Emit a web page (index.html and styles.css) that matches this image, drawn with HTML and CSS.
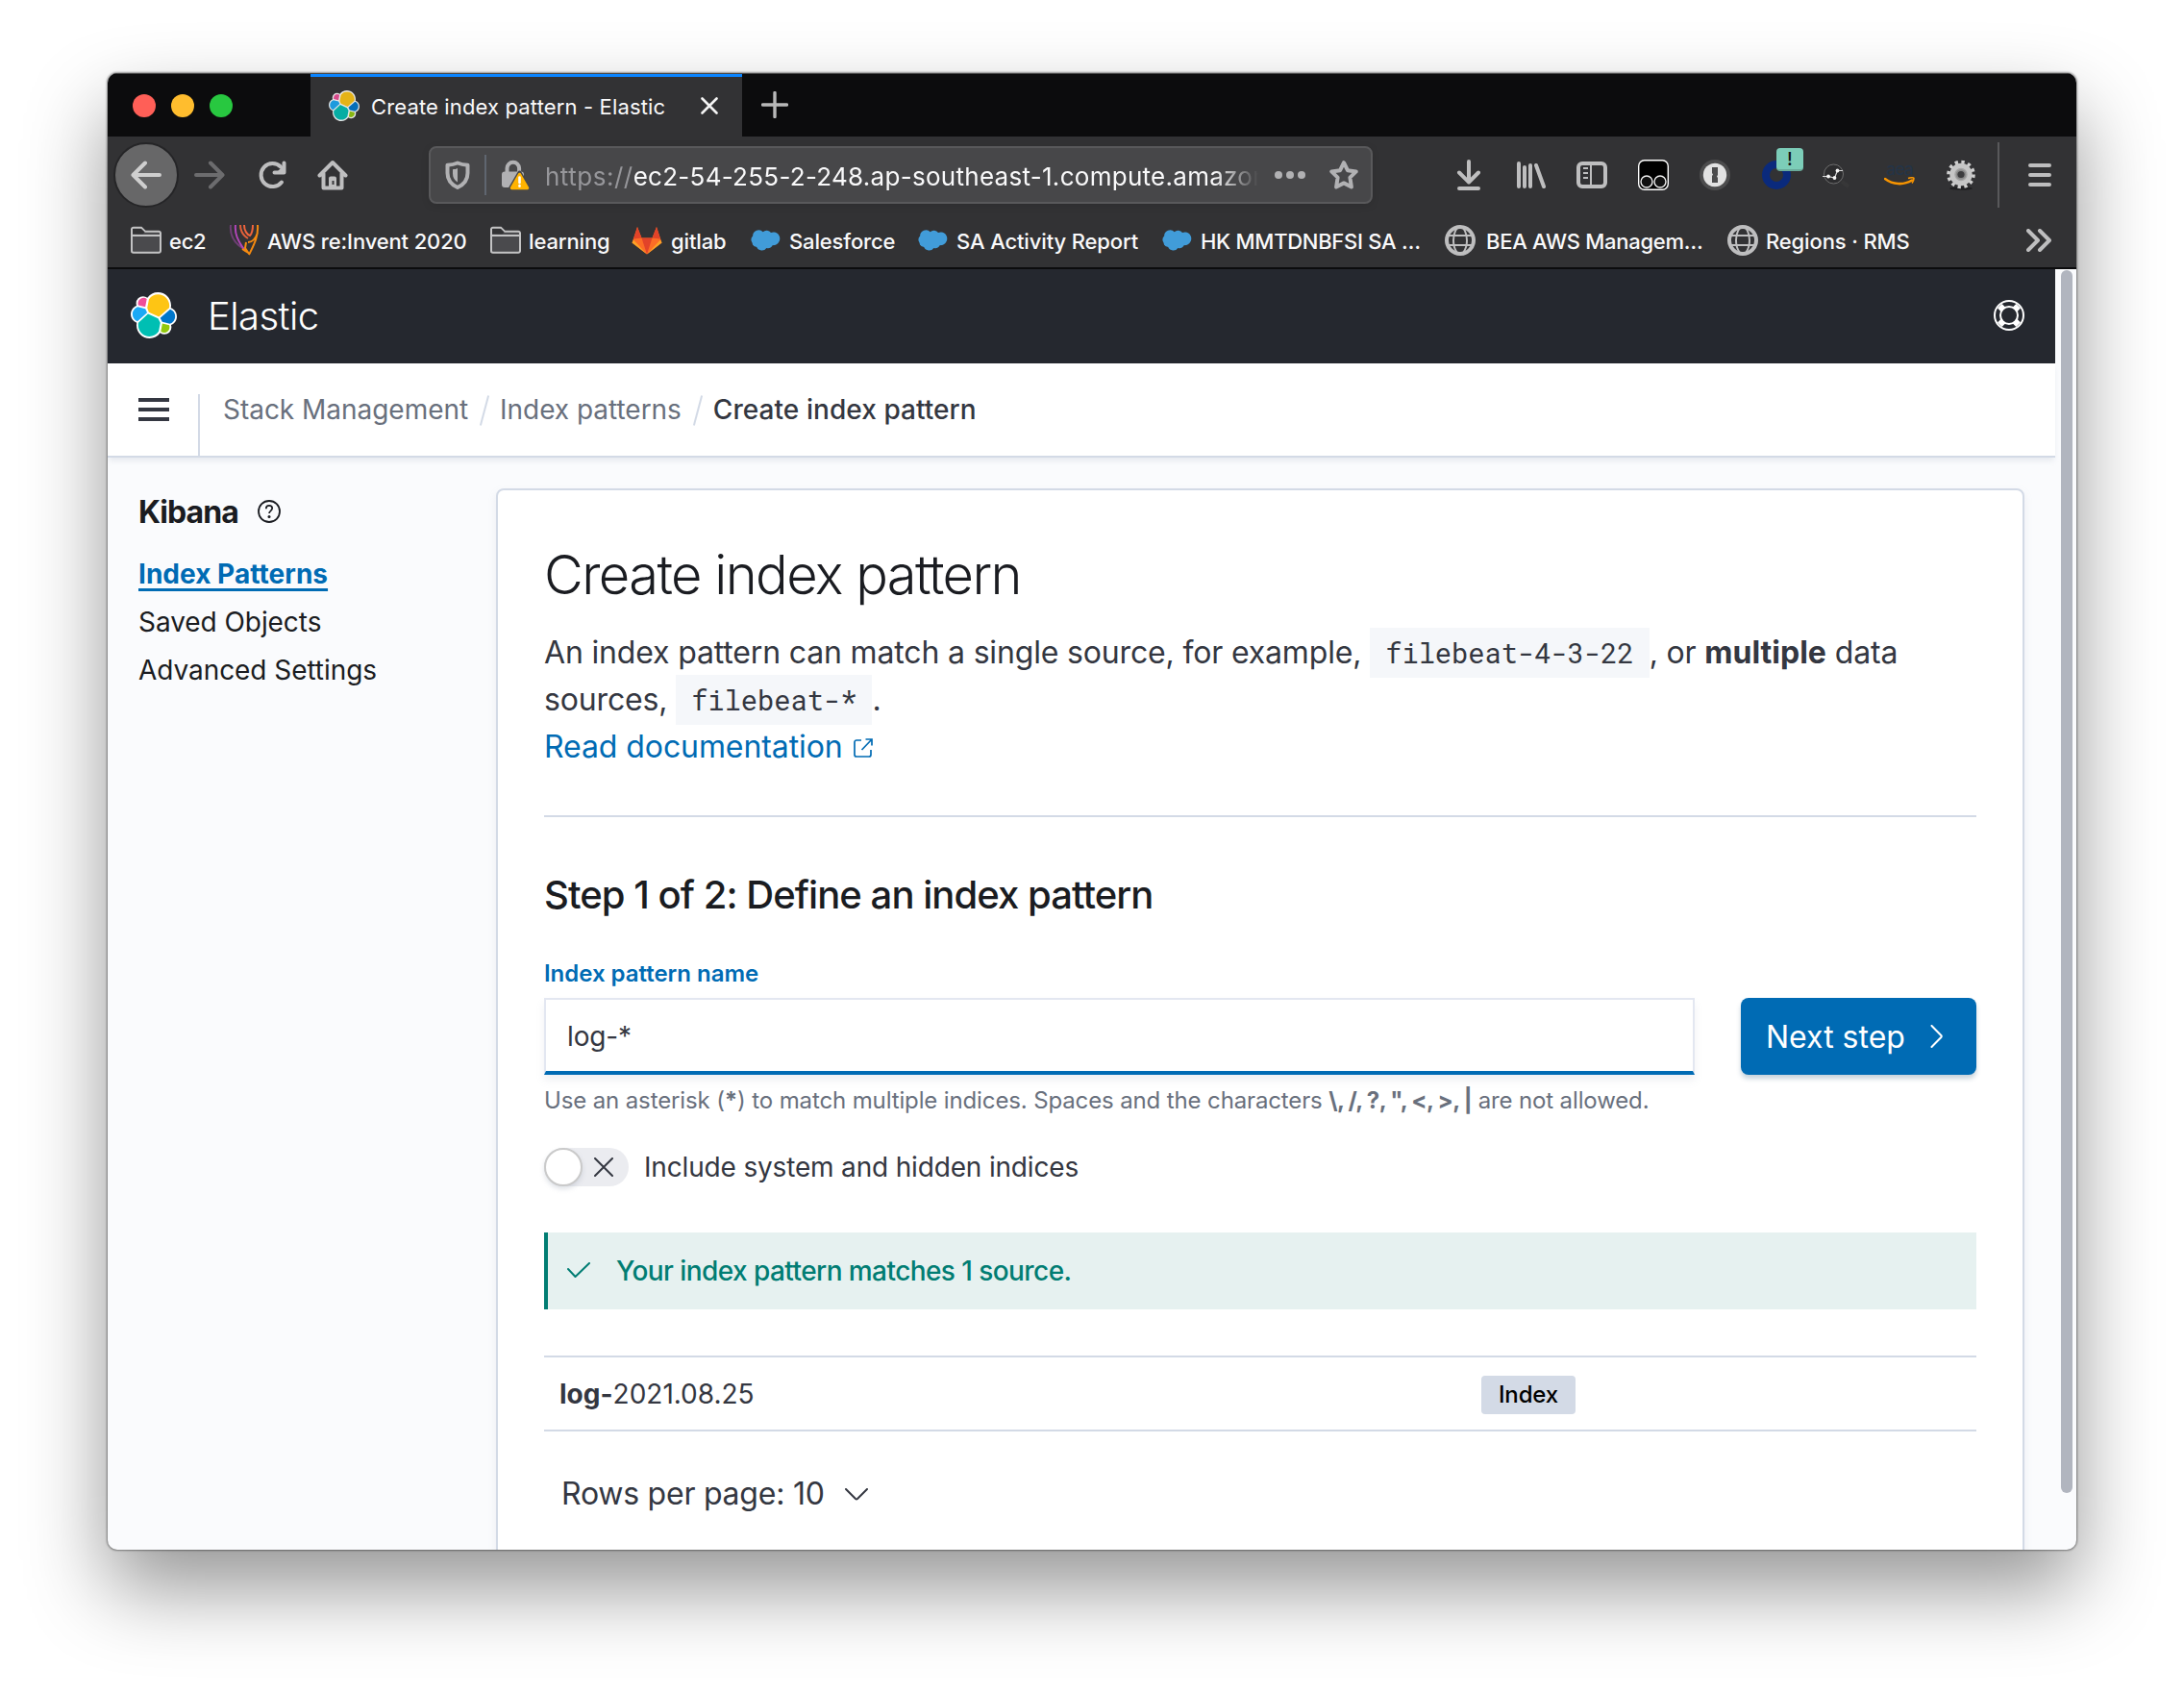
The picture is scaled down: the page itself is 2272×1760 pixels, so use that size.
FILE: index.html
```html
<!DOCTYPE html>
<html lang="en">
<head>
<meta charset="utf-8">
<title>Create index pattern - Elastic</title>
<link rel="stylesheet" href="styles.css">
</head>
<body>
<svg class="sprite" width="0" height="0">
  <symbol id="elastic" viewBox="0 0 32 32">
    <path fill="#fff" d="M32 16.77c0-2.68-1.66-5.02-4.16-5.93.11-.57.17-1.14.17-1.74C28 4.08 23.92 0 18.91 0a9.07 9.07 0 0 0-7.36 3.77 4.8 4.8 0 0 0-2.96-1.01 4.85 4.85 0 0 0-4.85 4.85c0 .59.11 1.16.3 1.69C1.64 10.2 0 12.57 0 15.23c0 2.69 1.67 5.04 4.18 5.95-.11.56-.17 1.14-.17 1.74 0 5 4.07 9.07 9.06 9.07 2.93 0 5.64-1.41 7.35-3.78a4.82 4.82 0 0 0 2.98 1.03 4.85 4.85 0 0 0 4.85-4.85c0-.59-.11-1.16-.3-1.69 2.4-.87 4.05-3.24 4.05-5.93"/>
    <path fill="#fec514" d="M12.58 13.787l7.002 3.211 7.066-6.213a7.849 7.849 0 0 0 .152-1.557c0-4.287-3.477-7.775-7.749-7.775A7.738 7.738 0 0 0 12.655 4.8l-1.176 6.1 1.1 2.887z"/>
    <path fill="#00bfb3" d="M5.333 21.228A7.964 7.964 0 0 0 5.18 22.8c0 4.301 3.489 7.8 7.778 7.8a7.77 7.77 0 0 0 6.415-3.39l1.166-6.095-1.557-2.985-7.03-3.211-6.62 6.209z"/>
    <path fill="#f04e98" d="M5.288 9.067l4.8 1.137L11.14 4.73a3.785 3.785 0 0 0-6.077 3.027c0 .453.08.907.226 1.31z"/>
    <path fill="#1ba9f5" d="M4.872 10.214C2.737 10.923 1.24 12.98 1.24 15.24a5.33 5.33 0 0 0 3.4 4.97l6.733-6.1-1.236-2.647z"/>
    <path fill="#93c90e" d="M20.872 27.216a3.782 3.782 0 0 0 6.07-3.026 3.94 3.94 0 0 0-.225-1.32l-4.796-1.125z"/>
    <path fill="#07c" d="M21.845 20.563l5.28 1.237c2.146-.71 3.642-2.768 3.642-5.028a5.318 5.318 0 0 0-3.41-4.96l-6.906 6.06z"/>
  </symbol>
  <symbol id="folder" viewBox="0 0 32 32">
    <path d="M1 27V4.500a1.800 1.800 0 0 1 1.800-1.800H11l4 4H29.200A1.800 1.800 0 0 1 31 8.500V27a1.800 1.800 0 0 1-1.800 1.800H2.800A1.800 1.800 0 0 1 1 27z" fill="#4a4a4d" stroke="#c3c3c4" stroke-width="2"/>
    <path d="M2 9V4h9l3.500 3.500-2 2z" fill="#323234"/>
    <path d="M1 11h30" stroke="#c3c3c4" stroke-width="2"/>
  </symbol>
  <symbol id="cloud" viewBox="0 0 32 32">
    <path fill="#419cd9" d="M12.700 7.200a5.400 5.400 0 0 1 8.300.9 6.600 6.600 0 0 1 9.300 6c0 4-3.200 7.500-7.400 7a5.200 5.200 0 0 1-6.500 2.800 5.900 5.900 0 0 1-10.200-.9A5.200 5.200 0 0 1 1.500 18.400 5.500 5.500 0 0 1 2.100 11.500 6.200 6.200 0 0 1 12.700 7.200z"/>
  </symbol>
  <symbol id="globe" viewBox="0 0 32 32">
    <g fill="none" stroke="#bebebf"><circle cx="16" cy="16" r="14" stroke-width="4"/><ellipse cx="16" cy="16" rx="7" ry="14" stroke-width="2"/><path d="M3 11h26M3 21h26" stroke-width="2"/></g>
  </symbol>
</svg>

<div class="window">
  <div class="tabstrip">
    <div class="lights"><i class="red"></i><i class="yellow"></i><i class="green"></i></div>
    <div class="tab">
      <svg class="favicon"><use href="#elastic"/></svg>
      <span class="tab-title">Create index pattern - Elastic</span>
      <svg class="tab-close" viewBox="0 0 18 18"><path d="M1.500 1.500l15 15M16.500 1.500l-15 15" stroke="#f4f4f4" stroke-width="2.600" stroke-linecap="round"/></svg>
    </div>
    <svg class="newtab" viewBox="0 0 28 28"><path d="M14 1.500v25M1.500 14h25" stroke="#b8b8b8" stroke-width="3.400" stroke-linecap="round"/></svg>
  </div>

  <div class="toolbar">
    <div class="back"><svg viewBox="0 0 32 32"><path d="M30 16H3M15 3.500L2.500 16 15 28.500" fill="none" stroke="#cfcfcf" stroke-width="4" stroke-linecap="round" stroke-linejoin="round"/></svg></div>
    <svg class="ic forward" viewBox="0 0 32 32"><path d="M2 16h27M17 3.500L29.500 16 17 28.500" fill="none" stroke="#6c6c6e" stroke-width="4" stroke-linecap="round" stroke-linejoin="round"/></svg>
    <svg class="ic reload" viewBox="0 0 32 32"><path d="M26 23.500A12 12 0 1 1 25 7.500" fill="none" stroke="#bebebf" stroke-width="4" stroke-linecap="round"/><path d="M28.500 3.500v10h-10" fill="none" stroke="#bebebf" stroke-width="4" stroke-linecap="round" stroke-linejoin="round"/><path d="M21 13h8V5z" fill="#bebebf"/></svg>
    <svg class="ic home" viewBox="0 0 32 32"><path d="M2.500 16.500L16 3l13.500 13.500M6.500 14.500v15h19v-15" fill="none" stroke="#bebebf" stroke-width="4" stroke-linecap="round" stroke-linejoin="round"/><path d="M12 30V19.500a2 2 0 0 1 2-2h4a2 2 0 0 1 2 2V30z" fill="#bebebf"/><rect x="15.500" y="22" width="2" height="4" fill="#38383b"/></svg>
    <div class="urlbar">
      <svg class="shield" viewBox="0 0 26 30"><path d="M13 2.500c3 1.300 6.500 2 10.500 2.200V13c0 7.500-4 12-10.500 15C6.500 25 2.500 20.500 2.500 13V4.700C6.500 4.500 10 3.800 13 2.500z" fill="none" stroke="#b1b1b3" stroke-width="4" stroke-linejoin="round"/><path d="M13 8v14.500c-3.300-2-5-4.700-5-9V9.200c2 0 3.500-.4 5-1.200z" fill="#b1b1b3"/></svg>
      <i class="url-sep"></i>
      <svg class="lock" viewBox="0 0 30 32"><path d="M6.500 14V9a6.300 6.300 0 0 1 12.600 0v5" fill="none" stroke="#b1b1b3" stroke-width="4"/><rect x="1" y="12.500" width="23" height="16.500" rx="3" fill="#b1b1b3"/><path d="M19.500 13.500L30 31.500H9z" fill="#474749" stroke="#474749" stroke-width="4" stroke-linejoin="round"/><path d="M19.500 15.500L27.500 29.500H11.500z" fill="#ffb300" stroke="#ffb300" stroke-width="3.500" stroke-linejoin="round"/><path d="M19.500 18.500v5.500M19.500 27v.8" stroke="#fff" stroke-width="2.600" stroke-linecap="round"/></svg>
      <div class="url"><span class="scheme">https://</span>ec2-54-255-2-248.ap-southeast-1.compute.amazonaws.com</div>
      <svg class="dots" viewBox="0 0 32 8"><g fill="#b1b1b3"><circle cx="4" cy="4" r="4"/><circle cx="16" cy="4" r="4"/><circle cx="28" cy="4" r="4"/></g></svg>
      <svg class="star" viewBox="0 0 32 32"><path d="M16 3.200l3.900 8 8.900 1.200-6.400 6.200 1.500 9.900L16 24.400l-7.900 4.100 1.500-9.900-6.400-6.200 8.900-1.200z" fill="none" stroke="#b1b1b3" stroke-width="4" stroke-linejoin="round"/></svg>
    </div>
    <div class="extensions">
      <svg viewBox="0 0 32 32"><path d="M16 2v21M6 13.500l10 10 10-10M6 30h20" fill="none" stroke="#bebebf" stroke-width="4" stroke-linecap="round" stroke-linejoin="round"/></svg>
      <svg viewBox="0 0 32 32"><path d="M4 4v24M10 8v20M16 6v22M22 6l8 22" fill="none" stroke="#bebebf" stroke-width="4" stroke-linecap="round"/></svg>
      <svg viewBox="0 0 32 32"><rect x="2" y="4" width="28" height="24" rx="4" fill="none" stroke="#bebebf" stroke-width="4"/><path d="M15 4v24M7 9h5M7 14h5M7 19h5" stroke="#bebebf" stroke-width="2"/></svg>
      <svg viewBox="0 0 32 32"><rect x=".7" y=".7" width="30.600" height="30.600" rx="6" fill="#000" stroke="#fff" stroke-width="1.400"/><g fill="#111" stroke="#eee" stroke-width="1.400"><circle cx="9" cy="23" r="6"/><circle cx="23" cy="23" r="6"/></g></svg>
      <svg viewBox="0 0 32 32"><circle cx="16" cy="16" r="16" fill="#4c4c4d"/><circle cx="16" cy="16" r="12.200" fill="#e2e2e2"/><path d="M13 8h6v8l-1 1.500 1 1.500v5h-6v-7l1-1.500-1-1.500z" fill="#4c4c4d"/></svg>
      <div class="ext-badged"><svg viewBox="0 0 32 32"><circle cx="16" cy="16" r="11" fill="none" stroke="#0a2a7c" stroke-width="8"/></svg><b>!</b></div>
      <svg viewBox="0 0 32 32"><circle cx="11.500" cy="15" r="10" fill="#2c2c2e" stroke="#7d7d7d" stroke-width=".8"/><path d="M20 23l7 5" stroke="#373738" stroke-width="4"/><path d="M0 17.500h6l6.500 1.500 3-7.500h5.500" fill="none" stroke="#d8d8d8" stroke-width="1.200"/><g fill="#f4f4f4"><circle cx="6" cy="17.500" r="1.900"/><circle cx="12.500" cy="19" r="1.900"/><circle cx="15.500" cy="11.500" r="1.900"/></g></svg>
      <div class="ext-aea"><span>aea</span><svg viewBox="0 0 32 10"><path d="M1 2c8 6 19 7 28 1.500" fill="none" stroke="#f79400" stroke-width="2.600" stroke-linecap="round"/><path d="M25 1.500c3-1 6-1 6 0s-.5 3-2 5" fill="none" stroke="#f79400" stroke-width="1.600"/></svg></div>
      <svg viewBox="0 0 32 32"><ellipse cx="16" cy="30" rx="12" ry="1.800" fill="#202022"/><circle cx="16" cy="15.500" r="12.500" fill="none" stroke="#cfcfcf" stroke-width="4.600" stroke-dasharray="3.200 3.344"/><circle cx="16" cy="15.500" r="8.200" fill="none" stroke="#c6c6c6" stroke-width="7"/><circle cx="16" cy="15.500" r="6" fill="#8a8a8a" stroke="#a4a4a4" stroke-width="1.400"/><circle cx="16" cy="15.500" r="3.600" fill="#3c3c3e"/></svg>
    </div>
    <i class="tool-sep"></i>
    <svg class="menu" viewBox="0 0 24 24"><path d="M2 2h20M2 12h20M2 22h20" stroke="#bebebf" stroke-width="4" stroke-linecap="round"/></svg>
  </div>

  <div class="bookmarks">
    <div class="bm"><svg><use href="#folder"/></svg><span class="snug">ec2</span></div>
    <div class="bm"><svg viewBox="0 0 32 32"><g fill="none" stroke-width="2"><path d="M2 0c-1 10 3 19 14 25" stroke="#6e3f74"/><path d="M7 0c-1 9 2 16 10 27" stroke="#b146b8"/><path d="M12 0c0 7 3 11 8 14" stroke="#e0603a"/><path d="M16 0c0 6 3 10 6 11 3-3 3-7 3-11" stroke="#f0643c"/><path d="M30 0c1 12-4 21-9 31M30 8c-2 6-6 10-10 10" stroke="#f58a10"/><path d="M14 25l8 5M18 18l-1 6 4 6" stroke="#f58a10"/></g></svg><span>AWS re:Invent 2020</span></div>
    <div class="bm"><svg><use href="#folder"/></svg><span>learning</span></div>
    <div class="bm gitlab"><svg viewBox="0 0 32 32"><path d="M16 30.500L.5 18.500 6 2l4.500 11.500h11L26 2l5.500 16.500z" fill="#fc6d26"/><path d="M16 30.500L10.500 13.500h11z" fill="#e24329"/><path d="M16 30.500L2 15.500.5 18.500zM16 30.500L30 15.500l1.500 3z" fill="#fca326"/><path d="M2 14.500L6 2l4.500 11.500zM30 14.500L26 2l-4.500 11.500z" fill="#e24329"/></svg><span>gitlab</span></div>
    <div class="bm"><svg><use href="#cloud"/></svg><span>Salesforce</span></div>
    <div class="bm"><svg><use href="#cloud"/></svg><span>SA Activity Report</span></div>
    <div class="bm"><svg><use href="#cloud"/></svg><span class="snug">HK MMTDNBFSI SA …</span></div>
    <div class="bm globe"><svg><use href="#globe"/></svg><span class="snug">BEA AWS Managem…</span></div>
    <div class="bm"><svg><use href="#globe"/></svg><span>Regions · RMS</span></div>
    <svg class="more" viewBox="0 0 26 24"><path d="M2 2l10 10L2 22M14 2l10 10-10 10" fill="none" stroke="#bebebf" stroke-width="4" stroke-linecap="round" stroke-linejoin="round"/></svg>
  </div>

  <div class="viewport">
    <div class="app">
      <header class="header">
        <svg class="logo"><use href="#elastic"/></svg>
        <span class="brand">Elastic</span>
        <svg class="help" viewBox="0 0 32 32"><g fill="none" stroke="#fff" stroke-width="2"><circle cx="16" cy="16" r="15"/><circle cx="16" cy="16" r="9"/></g><path d="M6.300 6.300l3.800 3.800M25.700 6.300l-3.800 3.800M6.300 25.700l3.800-3.800M25.700 25.700l-3.800-3.800" stroke="#fff" stroke-width="6.500"/></svg>
      </header>
      <div class="crumbbar">
        <svg class="burger" viewBox="0 0 32 24"><path d="M0 2h32M0 12h32M0 22h32" stroke="#343741" stroke-width="4"/></svg>
        <nav class="crumbs"><span>Stack Management</span><i></i><span>Index patterns</span><i></i><span class="current">Create index pattern</span></nav>
      </div>
      <div class="body">
        <aside class="side">
          <h2>Kibana <svg viewBox="0 0 24 24"><circle cx="12" cy="12" r="11" fill="none" stroke="#1a1c21" stroke-width="1.800"/><path d="M8.800 9.200c0-2 1.400-3.300 3.200-3.300s3.200 1.200 3.200 2.900c0 2.500-3.200 2.500-3.200 5.200" fill="none" stroke="#1a1c21" stroke-width="1.700"/><circle cx="12" cy="17.500" r="1.500" fill="#1a1c21"/></svg></h2>
          <a class="active">Index Patterns</a>
          <a>Saved Objects</a>
          <a>Advanced Settings</a>
        </aside>
        <main class="panel">
          <h1>Create index pattern</h1>
          <p class="intro">An index pattern can match a single source, for example, <code>filebeat-4-3-22</code>, or <strong>multiple</strong> data sources, <code>filebeat-*</code>.<br><a>Read documentation<svg viewBox="0 0 20 20"><path d="M8 2H3a2 2 0 0 0-2 2v13a2 2 0 0 0 2 2h13a2 2 0 0 0 2-2v-5M12.500 1H19v6.500M19 1L8.500 12" fill="none" stroke="#006bb4" stroke-width="1.700"/></svg></a></p>
          <hr>
          <h3>Step 1 of 2: Define an index pattern</h3>
          <div class="label">Index pattern name</div>
          <div class="row">
            <div class="input">log-*</div>
            <div class="button">Next step<svg viewBox="0 0 14 24"><path d="M1.500 1l9.800 10a1.500 1.500 0 0 1 0 2L1.500 23" fill="none" stroke="#fff" stroke-width="2" stroke-linecap="round"/></svg></div>
          </div>
          <div class="hint">Use an asterisk (<b>*</b>) to match multiple indices. Spaces and the characters <b class="chars">\, /, ?, ", &lt;, &gt;, |</b> are not allowed.</div>
          <div class="toggle"><div class="switch"><i></i><svg viewBox="0 0 20 20"><path d="M1 1l18 18M19 1L1 19" stroke="#343741" stroke-width="2" stroke-linecap="round"/></svg></div><span>Include system and hidden indices</span></div>
          <div class="callout"><svg viewBox="0 0 24 16"><path d="M1 7l7.500 8L23 1" fill="none" stroke="#017d73" stroke-width="2" stroke-linecap="round" stroke-linejoin="round"/></svg><span>Your index pattern matches 1 source.</span></div>
          <div class="table"><span><b>log-</b>2021.08.25</span><span class="badge">Index</span></div>
          <div class="pager">Rows per page: 10<svg viewBox="0 0 24 13"><path d="M1 1l10 10a1.500 1.500 0 0 0 2 0L23 1" fill="none" stroke="#343741" stroke-width="2" stroke-linecap="round"/></svg></div>
        </main>
      </div>
    </div>
    <div class="scroll"><i></i></div>
  </div>
</div>
</body>
</html>
```
FILE: styles.css
```css
* { box-sizing: border-box; }
body { margin: 0; padding: 76px 112px 0; height: 1760px; overflow: hidden; background: #fff; font-family: Inter, "Liberation Sans", sans-serif; color: #343741; }
.sprite { position: absolute; }
svg { display: block; flex: none; }
.window { height: 1536px; border-radius: 10px; overflow: hidden; background: #fafbfd; display: flex; flex-direction: column; box-shadow: 0 0 2px 1px rgba(0,0,0,.4), 0 40px 84px rgba(0,0,0,.42); }

.tabstrip { height: 66px; flex: none; background: #0c0c0d; display: flex; border-top: 1px solid #4a4a4a; padding-left: 26px; }
.lights { width: 185px; display: flex; gap: 16px; align-items: center; }
.lights i { width: 24px; height: 24px; border-radius: 50%; }
.red { background: #ff5f57; }
.yellow { background: #ffbd2e; }
.green { background: #28c840; }
.tab { width: 449px; background: #323234; border-top: 3px solid #0a84ff; display: flex; align-items: center; padding: 0 25px 2px 19px; }
.favicon { width: 32px; height: 32px; margin-right: 12px; opacity: .88; }
.tab-title { font-size: 22px; letter-spacing: .14px; color: #f9f9fa; padding-top: 2px; flex: 1; white-space: nowrap; }
.tab-close { width: 18px; height: 18px; }
.newtab { width: 28px; height: 28px; margin: 18px 0 0 20px; }

.toolbar { height: 80px; flex: none; background: #323234; display: flex; align-items: center; padding-left: 6px; }
.back { width: 68px; height: 68px; border-radius: 50%; background: #676768; border: 2px solid #252527; display: flex; align-items: center; justify-content: center; }
.back svg, .ic { width: 32px; height: 32px; }
.forward { margin-left: 16px; }
.reload { margin-left: 33px; }
.home { margin-left: 31px; }
.urlbar { width: 982px; height: 60px; margin-left: 84px; background: #474749; border: 2px solid #59595b; border-radius: 8px; display: flex; align-items: center; padding-left: 15px; box-shadow: 0 2px 8px rgba(0,0,0,.1); }
.shield { width: 26px; height: 30px; }
.url-sep { width: 2px; height: 42px; background: #5f6670; margin: 0 15px; }
.lock { width: 30px; height: 32px; }
.url { width: 742px; margin-left: 16px; padding-top: 2px; font-size: 26px; letter-spacing: .28px; color: #f9f9fa; white-space: nowrap; overflow: hidden; -webkit-mask-image: linear-gradient(90deg, #000 696px, transparent 742px); mask-image: linear-gradient(90deg, #000 696px, transparent 742px); }
.scheme { color: #96969a; letter-spacing: .5px; }
.dots { width: 32px; height: 8px; margin-left: 17px; }
.star { width: 32px; height: 32px; margin-left: 24px; }
.extensions { display: flex; gap: 32px; margin-left: 84px; }
.extensions > svg, .ext-badged, .ext-aea { width: 32px; height: 32px; position: relative; }
.ext-badged b { position: absolute; left: 16px; top: -12px; width: 28px; height: 24px; border-radius: 4px; background: #7ccdb8; border-bottom: 2px solid #69ab9a; color: #111; font: 500 19px/24px Inter, sans-serif; text-align: center; }
.ext-aea span { display: block; font: 400 18px/20px Inter, sans-serif; color: #243447; letter-spacing: -1px; text-align: center; }
.ext-aea svg { width: 32px; height: 10px; margin-top: -2px; }
.tool-sep { width: 2px; height: 68px; background: #59595b; margin-left: 22px; }
.menu { width: 24px; height: 24px; margin-left: 30px; }

.bookmarks { height: 58px; flex: none; background: #323234; border-bottom: 2px solid #0c0c0d; padding-left: 24px; display: grid; grid-template-columns: 102px 272px 147px 124px 174px 254px 294px 294px 311px 26px; align-items: center; }
.bm { display: flex; align-items: center; gap: 8px; font-size: 22px; font-weight: 500; letter-spacing: -.14px; color: #f9f9fa; white-space: nowrap; }
.bm svg { width: 32px; height: 32px; }
.bm span { padding-top: 2px; }
.bm .snug { letter-spacing: -.28px; }
.bm.globe { gap: 11px; }
.bm.gitlab { gap: 9px; }
.more { width: 26px; height: 24px; }

.viewport { flex: 1; display: flex; min-height: 0; }
.app { width: 2026px; display: flex; flex-direction: column; }
.header { height: 98px; flex: none; background: #25282f; display: flex; align-items: center; padding: 0 32px 2px 24px; }
.logo { width: 48px; height: 48px; }
.brand { margin-left: 32px; flex: 1; font-size: 40px; font-weight: 300; letter-spacing: -.55px; color: #fff; }
.help { width: 32px; height: 32px; }
.crumbbar { height: 98px; flex: none; background: #fff; border-bottom: 2px solid #d3dae6; display: flex; align-items: center; padding-left: 32px; box-shadow: 0 4px 6px -1px rgba(152,162,179,.2); position: relative; }
.burger { width: 32px; height: 24px; margin-right: 30px; }
.crumbs { align-self: flex-end; height: 64px; border-left: 2px solid #d3dae6; padding: 0 0 32px 24px; display: flex; align-items: center; font-size: 28px; color: #69707d; line-height: 32px; letter-spacing: -.03px; white-space: nowrap; }
.crumbs i { width: 2px; height: 32px; background: #d3dae6; margin: 2px 15px 0 16px; transform: rotate(15deg); }
.crumbs .current { color: #343741; font-weight: 500; letter-spacing: .06px; }
.body { flex: 1; display: flex; min-height: 0; }
.side { width: 404px; padding: 33px 0 0 32px; font-size: 28px; color: #1a1c21; }
.side h2 { margin: 0 0 15px; font-size: 32px; line-height: 48px; font-weight: 700; letter-spacing: -.95px; display: flex; align-items: center; gap: 13px; }
.side h2 svg { width: 24px; height: 24px; margin: -2px 0 0 7px; }
.side a { display: block; line-height: 50px; letter-spacing: -.06px; }
.side .active { color: #006bb4; font-weight: 700; letter-spacing: .03px; text-decoration: underline; text-decoration-thickness: 3px; text-underline-offset: 5px; }
.panel { width: 1590px; margin-top: 32px; height: 1300px; flex: none; background: #fff; border: 2px solid #d3dae6; border-radius: 8px; padding: 48px; box-shadow: 0 4px 8px rgba(152,162,179,.15); }
h1 { margin: 0; font-size: 56px; line-height: 80px; font-weight: 300; letter-spacing: -1.57px; color: #1a1c21; }
.intro { margin: 16px 0 0; font-size: 32px; line-height: 49px; letter-spacing: -.16px; }
.intro strong { letter-spacing: 0; }
code { font-family: "Roboto Mono", "DejaVu Sans Mono", monospace; font-size: 28.8px; line-height: 1; letter-spacing: -.05px; background: #f5f7fa; padding: 7px 16px; }
.intro a { color: #006bb4; letter-spacing: -.08px; }
.intro a svg { display: inline-block; width: 20px; height: 20px; margin-left: 11px; vertical-align: 0; }
hr { margin: 47px 0 0; border: 0; height: 2px; background: #d3dae6; }
h3 { margin: 51px 0 0; font-size: 40px; line-height: 60px; font-weight: 540; letter-spacing: -.95px; color: #1a1c21; }
.label { margin-top: 34px; font-size: 24px; line-height: 36px; font-weight: 600; color: #006bb4; letter-spacing: -.02px; }
.row { margin-top: 7px; display: flex; justify-content: space-between; }
.input { width: 1197px; height: 80px; border: 2px solid #e3e7f1; border-bottom: 4px solid #006bb4; padding-left: 22px; font-size: 28px; line-height: 76px; letter-spacing: -.14px; box-shadow: 0 6px 8px rgba(152,162,179,.15); }
.button { width: 245px; height: 80px; border-radius: 8px; background: #006bb4; color: #fff; font-size: 32px; display: flex; align-items: center; justify-content: space-between; padding: 0 34px 0 26px; box-shadow: 0 4px 5px rgba(54,97,126,.28); }
.button svg { width: 14px; height: 24px; }
.hint { margin-top: 9px; font-size: 24px; line-height: 36px; letter-spacing: -.13px; color: #69707d; white-space: nowrap; }
.chars { letter-spacing: -.67px; }
.toggle { margin-top: 31px; display: flex; align-items: center; font-size: 28px; letter-spacing: -.17px; height: 40px; }
.switch { width: 88px; height: 40px; border-radius: 20px; background: #ebecf0; display: flex; align-items: center; gap: 12px; margin-right: 16px; }
.switch i { width: 40px; height: 40px; border-radius: 50%; background: #fff; border: 2px solid #cacaca; box-shadow: 0 3px 5px rgba(152,162,179,.3); }
.switch svg { width: 20px; height: 20px; }
.callout { margin-top: 48px; height: 80px; background: #e6f1f0; border-left: 4px solid #017d73; display: flex; align-items: center; padding-left: 20px; color: #017d73; font-size: 28px; font-weight: 450; letter-spacing: -.57px; }
.callout svg { width: 24px; height: 16px; margin-right: 27px; margin-top: -2px; }
.table { margin-top: 48px; height: 79px; border: solid #d3dae6; border-width: 2px 0; display: grid; grid-template-columns: 959px 1fr; align-items: center; padding-left: 16px; font-size: 28px; }
.badge { justify-self: start; width: 98px; height: 40px; border-radius: 4px; background: #d3dae6; color: #000; font-size: 24px; font-weight: 500; letter-spacing: -.15px; line-height: 40px; text-align: center; margin-top: 2px; }
.pager { margin-top: 25px; padding-left: 18px; display: flex; align-items: center; line-height: 80px; font-size: 32px; letter-spacing: -.24px; }
.pager svg { width: 24px; height: 13px; margin-left: 21px; }
.scroll { flex: 1; padding: 1px 0 0 6px; }
.scroll i { display: block; width: 12px; height: 1272px; border-radius: 6px; background: #b1b5bf; }
```
